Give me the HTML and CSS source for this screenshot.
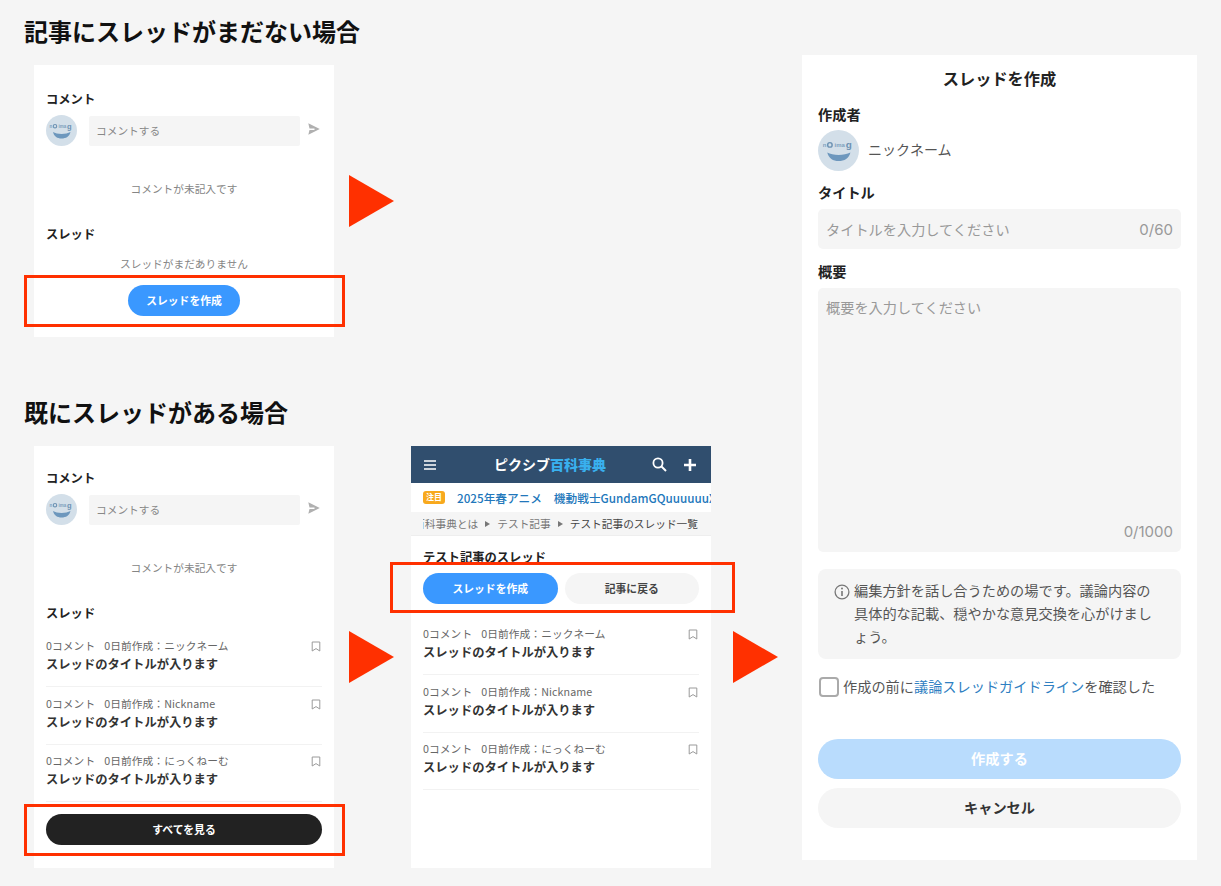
FILE: index.html
```html
<!DOCTYPE html>
<html lang="ja">
<head>
<meta charset="utf-8">
<title>スレッド</title>
<link rel="stylesheet" href="styles.css">
</head>
<body>
<svg class="defs" width="0" height="0" aria-hidden="true">
  <symbol id="bookmark" viewBox="0 0 10 11">
    <path d="M1.2 1h7.6v9L5 7.6 1.2 10z" fill="none" stroke="#9a9a9a" stroke-width="1"/>
  </symbol>
  <symbol id="send" viewBox="0 0 12 12">
    <path d="M0.3 0.3 11.8 6 0.3 11.7 1.5 7H6.5V5.6H1.5z" fill="#b0b0b0"/>
  </symbol>
</svg>

<main class="stage">
  <section class="col-left">
    <h2 class="heading">記事にスレッドがまだない場合</h2>
    <div class="panel panel-a">
      <h3 class="label">コメント</h3>
      <div class="comment-row">
        <svg class="avatar-sm" viewBox="0 0 62 62">
          <circle cx="31" cy="31" r="31" fill="#d3dfe9"/>
          <text class="avatar-text" x="7" y="26">n</text>
          <circle cx="18" cy="22.5" r="3.4" fill="none" stroke="#6d92b3" stroke-width="2.2"/>
          <text class="avatar-text" x="25" y="26">ima</text>
          <text class="avatar-g" x="42" y="27">g</text>
          <path d="M14 34C22 39 40 39 49 34 47 43 40 47 31 47 23 47 16 43 14 34z" fill="#6d97bd"/>
        </svg>
        <div class="comment-input">コメントする</div>
        <svg class="send"><use href="#send"/></svg>
      </div>
      <p class="empty empty-comment">コメントが未記入です</p>
      <h3 class="label label-thread">スレッド</h3>
      <p class="empty empty-thread">スレッドがまだありません</p>
      <div class="center-row"><span class="pill pill-blue pill-create">スレッドを作成</span></div>
      <div class="frame frame-a"></div>
    </div>

    <h2 class="heading heading-second">既にスレッドがある場合</h2>
    <div class="panel panel-b">
      <h3 class="label">コメント</h3>
      <div class="comment-row">
        <svg class="avatar-sm" viewBox="0 0 62 62">
          <circle cx="31" cy="31" r="31" fill="#d3dfe9"/>
          <text class="avatar-text" x="7" y="26">n</text>
          <circle cx="18" cy="22.5" r="3.4" fill="none" stroke="#6d92b3" stroke-width="2.2"/>
          <text class="avatar-text" x="25" y="26">ima</text>
          <text class="avatar-g" x="42" y="27">g</text>
          <path d="M14 34C22 39 40 39 49 34 47 43 40 47 31 47 23 47 16 43 14 34z" fill="#6d97bd"/>
        </svg>
        <div class="comment-input">コメントする</div>
        <svg class="send"><use href="#send"/></svg>
      </div>
      <p class="empty empty-comment">コメントが未記入です</p>
      <h3 class="label label-thread">スレッド</h3>
      <ul class="threads">
        <li class="thread">
          <div class="thread-meta"><span>0コメント&nbsp;&nbsp;0日前作成：ニックネーム</span><svg class="bookmark"><use href="#bookmark"/></svg></div>
          <div class="thread-title">スレッドのタイトルが入ります</div>
        </li>
        <li class="thread">
          <div class="thread-meta"><span>0コメント&nbsp;&nbsp;0日前作成：Nickname</span><svg class="bookmark"><use href="#bookmark"/></svg></div>
          <div class="thread-title">スレッドのタイトルが入ります</div>
        </li>
        <li class="thread">
          <div class="thread-meta"><span>0コメント&nbsp;&nbsp;0日前作成：にっくねーむ</span><svg class="bookmark"><use href="#bookmark"/></svg></div>
          <div class="thread-title">スレッドのタイトルが入ります</div>
        </li>
      </ul>
      <span class="pill pill-dark">すべてを見る</span>
      <div class="frame frame-b"></div>
    </div>
  </section>

  <section class="panel panel-c">
    <header class="topbar">
      <svg class="topicon" width="12" height="10" viewBox="0 0 12 10"><path d="M0 1h12M0 5h12M0 9h12" stroke="#fff" stroke-width="1.5"/></svg>
      <div class="logo"><span class="logo-white">ピクシブ</span><span class="logo-blue">百科事典</span></div>
      <svg class="topicon search" width="15" height="15" viewBox="0 0 15 15"><circle cx="6" cy="6" r="4.6" fill="none" stroke="#fff" stroke-width="1.8"/><path d="M9.5 9.5 14 14" stroke="#fff" stroke-width="2"/></svg>
      <svg class="topicon plus" width="12" height="12" viewBox="0 0 12 12"><path d="M6 0v12M0 6h12" stroke="#fff" stroke-width="2.6"/></svg>
    </header>
    <div class="notice-bar">
      <span class="tag">注目</span>
      <span class="notice-link">2025年春アニメ</span>
      <span class="notice-link notice-link-second">機動戦士GundamGQuuuuuuX</span>
    </div>
    <nav class="crumbs">
      <div class="crumbs-inner"><span>百科事典とは</span><i class="crumb-arrow"></i><span>テスト記事</span><i class="crumb-arrow"></i><span class="crumb-current">テスト記事のスレッド一覧</span></div>
    </nav>
    <div class="body-c">
      <h3 class="label">テスト記事のスレッド</h3>
      <div class="btn-row">
        <span class="pill pill-blue pill-grow">スレッドを作成</span>
        <span class="pill pill-grey pill-grow">記事に戻る</span>
      </div>
      <ul class="threads threads-c">
        <li class="thread">
          <div class="thread-meta"><span>0コメント&nbsp;&nbsp;0日前作成：ニックネーム</span><svg class="bookmark"><use href="#bookmark"/></svg></div>
          <div class="thread-title">スレッドのタイトルが入ります</div>
        </li>
        <li class="thread">
          <div class="thread-meta"><span>0コメント&nbsp;&nbsp;0日前作成：Nickname</span><svg class="bookmark"><use href="#bookmark"/></svg></div>
          <div class="thread-title">スレッドのタイトルが入ります</div>
        </li>
        <li class="thread">
          <div class="thread-meta"><span>0コメント&nbsp;&nbsp;0日前作成：にっくねーむ</span><svg class="bookmark"><use href="#bookmark"/></svg></div>
          <div class="thread-title">スレッドのタイトルが入ります</div>
        </li>
      </ul>
    </div>
    <div class="frame frame-c"></div>
  </section>

  <section class="panel panel-d">
    <h2 class="form-title">スレッドを作成</h2>
    <h3 class="form-label form-label-author">作成者</h3>
    <div class="author">
      <svg class="avatar-lg" viewBox="0 0 62 62">
        <circle cx="31" cy="31" r="31" fill="#d3dfe9"/>
        <text class="avatar-text" x="7" y="26">n</text>
        <circle cx="18" cy="22.5" r="3.4" fill="none" stroke="#6d92b3" stroke-width="2.2"/>
        <text class="avatar-text" x="25" y="26">ima</text>
        <text class="avatar-g" x="42" y="27">g</text>
        <path d="M14 34C22 39 40 39 49 34 47 43 40 47 31 47 23 47 16 43 14 34z" fill="#6d97bd"/>
      </svg>
      <span class="author-name">ニックネーム</span>
    </div>
    <h3 class="form-label form-label-title">タイトル</h3>
    <div class="field field-title"><span>タイトルを入力してください</span><span class="count">0/60</span></div>
    <h3 class="form-label form-label-summary">概要</h3>
    <div class="field field-summary"><span>概要を入力してください</span><span class="count counter">0/1000</span></div>
    <div class="info">
      <svg class="info-icon" width="16" height="16" viewBox="0 0 16 16"><circle cx="8" cy="8" r="6.9" fill="none" stroke="#777" stroke-width="1.3"/><path d="M8 7v5" stroke="#777" stroke-width="1.6"/><circle cx="8" cy="4.6" r="1" fill="#777"/></svg>
      <p class="info-text">編集方針を話し合うための場です。議論内容の具体的な記載、穏やかな意見交換を心がけましょう。</p>
    </div>
    <div class="check-row">
      <span class="checkbox"></span>
      <span>作成の前に<span class="link">議論スレッドガイドライン</span>を確認した</span>
    </div>
    <div class="form-btn form-btn-submit">作成する</div>
    <div class="form-btn form-btn-cancel">キャンセル</div>
  </section>

  <div class="arrow arrow-1"></div>
  <div class="arrow arrow-2"></div>
  <div class="arrow arrow-3"></div>
</main>
</body>
</html>
```

FILE: styles.css
```css
* { box-sizing: border-box; }
html, body { margin: 0; padding: 0; }
body {
  background: #f5f5f5;
  color: #222;
  font-family: "Noto Sans CJK JP", "Noto Sans", sans-serif;
  font-size: 10.7px;
}
h2, h3, p, ul { margin: 0; padding: 0; }
ul { list-style: none; }
.defs { position: absolute; }

.stage {
  position: relative;
  display: flex;
  align-items: flex-start;
  width: 1221px;
  height: 886px;
  overflow: hidden;
}
.col-left { width: 411px; padding: 15px 0 0 24px; flex: none; }
.heading { font-size: 24px; line-height: 32px; font-weight: 700; color: #111; }
.heading-second { margin-top: 59px; }

.panel { position: relative; background: #fff; }
.panel-a, .panel-b { width: 300px; margin: 18px 0 0 10px; padding: 26px 12px 0; height: 272px; }
.panel-b { margin-top: 18px; padding-top: 24px; height: 422px; }
.panel-c { width: 300px; height: 422px; margin-top: 446px; flex: none; }
.panel-d { width: 395px; height: 805px; margin: 55px 0 0 91px; padding: 11px 16px 0; flex: none; }

.label { font-size: 12.3px; line-height: 16px; font-weight: 700; color: #222; }
.comment-row { display: flex; align-items: center; margin-top: 8px; height: 31px; }
.avatar-sm { width: 31px; height: 31px; flex: none; }
.avatar-text { font-family: "Liberation Sans", sans-serif; font-size: 9px; font-weight: 700; fill: #7d9fbd; }
.avatar-g { font-family: "Liberation Sans", sans-serif; font-size: 15px; font-weight: 700; fill: #6d92b3; }
.comment-input {
  width: 211px; height: 30px; margin-left: 12px; padding-left: 7px;
  background: #f5f5f5; border-radius: 2px; color: #888;
  line-height: 29px; margin-top: 1px;
}
.send { width: 12px; height: 12px; margin: -3px 0 0 8px; }
.empty { text-align: center; line-height: 16px; color: #858585; }
.empty-comment { margin-top: 35px; }
.label-thread { margin-top: 29px; }
.empty-thread { margin-top: 14px; }
.center-row { display: flex; justify-content: center; margin-top: 13px; }

.pill {
  display: flex; align-items: center; justify-content: center;
  height: 31px; padding-bottom: 2px; border-radius: 16px; font-weight: 700; font-size: 10.8px;
}
.pill-blue { background: #3a98ff; color: #fff; }
.pill-create { width: 112px; }
.pill-dark { background: #222; color: #fff; width: 276px; margin-top: 12px; }
.pill-grey { background: #f5f5f5; color: #444; }
.pill-grow { flex: 1; }

.threads { margin-top: 8px; }
.thread { padding: 9px 0 13px; border-bottom: 1px solid #f2f2f2; }
.thread:last-child { padding-top: 8px; }
.thread-meta {
  display: flex; justify-content: space-between; align-items: center;
  line-height: 16px; color: #666; word-spacing: 2px; letter-spacing: 0.1px;
}
.bookmark { width: 10px; height: 11px; margin-right: 1px; }
.thread-title { margin-top: 1px; font-size: 12.3px; line-height: 18px; font-weight: 700; color: #333; }

.topbar {
  position: relative; display: flex; align-items: center; height: 37px;
  padding-left: 13px; background: #304e6e;
}
.logo {
  position: absolute; left: 83px; top: 8px;
  font-size: 14px; line-height: 20px; font-weight: 700; white-space: nowrap;
}
.logo-white { color: #fff; }
.logo-blue { color: #39b0ee; font-weight: 900; }
.topicon { display: block; flex: none; }
.search { margin-left: 216px; }
.plus { margin-left: 17px; }

.notice-bar {
  display: flex; align-items: center; height: 28px; padding-left: 12px;
  background: #fff; white-space: nowrap; overflow: hidden;
}
.tag {
  width: 22px; height: 13px; flex: none; border-radius: 3px;
  background: #f8a91d; color: #fff; font-size: 8px; font-weight: 700;
  line-height: 12px; text-align: center;
}
.notice-link { margin-left: 12px; font-size: 11.7px; font-weight: 500; color: #2277bb; }
.notice-link-second { margin-left: 12px; }

.crumbs {
  height: 24px; margin-top: 1px; padding-left: 12px; overflow: hidden;
  background: #f5f5f5; border-bottom: 1px solid #eee;
}
.crumbs-inner {
  display: flex; align-items: center; height: 23px; width: 275px;
  overflow: hidden; white-space: nowrap; justify-content: flex-end; color: #777;
}
.crumbs-inner span { flex: none; }
.crumb-arrow {
  flex: none; width: 0; height: 0; margin: 0 7px;
  border-left: 5px solid #777; border-top: 3px solid transparent; border-bottom: 3px solid transparent;
}
.crumb-current { color: #444; }

.body-c { padding: 13px 12px 0; }
.btn-row { display: flex; gap: 7px; margin-top: 8px; }
.threads-c { margin-top: 13px; }

.frame { position: absolute; border: 3px solid #ff3000; pointer-events: none; }
.frame-a { left: -10px; top: 210px; width: 321px; height: 52px; }
.frame-b { left: -10px; top: 358px; width: 321px; height: 52px; }
.frame-c { left: -21px; top: 116px; width: 345px; height: 51px; }

.arrow {
  position: absolute; width: 45px; height: 52px;
  background: #ff3000; clip-path: polygon(0 0, 100% 50%, 0 100%);
}
.arrow-1 { left: 349px; top: 175px; }
.arrow-2 { left: 349px; top: 631px; }
.arrow-3 { left: 733px; top: 631px; }

.form-title { font-size: 16.2px; line-height: 24px; font-weight: 700; text-align: center; color: #222; }
.form-label { font-size: 14.2px; line-height: 20px; font-weight: 700; color: #222; }
.form-label-author { margin-top: 14px; }
.form-label-title { margin-top: 11px; }
.form-label-summary { margin-top: 12px; }
.author { display: flex; align-items: center; gap: 9px; margin-top: 6px; height: 41px; }
.avatar-lg { width: 41px; height: 41px; flex: none; }
.author-name { font-size: 14px; color: #555; padding-bottom: 3px; }

.field {
  display: flex; justify-content: space-between; margin-top: 7px; padding: 0 8px;
  background: #f5f5f5; border-radius: 5px; color: #999; font-size: 14.2px;
}
.field-title { height: 40px; align-items: center; }
.field-summary { position: relative; height: 264px; padding-top: 9px; line-height: 20px; }
.count { font-family: Inter, "Noto Sans", sans-serif; font-size: 15px; }
.counter { position: absolute; right: 8px; bottom: 10px; }

.info {
  display: flex; height: 90px; margin-top: 17px; padding: 15px 24px 0 16px;
  background: #f5f5f5; border-radius: 8px;
}
.info-icon { flex: none; margin-right: 4px; }
.info-text { font-size: 14.2px; line-height: 23px; color: #555; margin-top: -5px; }

.check-row { display: flex; align-items: center; gap: 4px; height: 19px; margin-top: 18px; font-size: 14.2px; color: #555; white-space: nowrap; }
.check-row > span:last-child { padding-bottom: 2px; }
.checkbox { width: 20px; height: 20px; flex: none; margin-left: 1px; border: 2px solid #aaa; border-radius: 4px; background: #fff; }
.link { color: #2f80c2; }

.form-btn {
  display: flex; align-items: center; justify-content: center;
  height: 40px; padding-bottom: 2px; border-radius: 20px; font-size: 14.2px; font-weight: 700;
}
.form-btn-submit { margin-top: 43px; background: #b9dcfd; color: #fff; }
.form-btn-cancel { margin-top: 9px; background: #f5f5f5; color: #333; padding-bottom: 3px; }
```
